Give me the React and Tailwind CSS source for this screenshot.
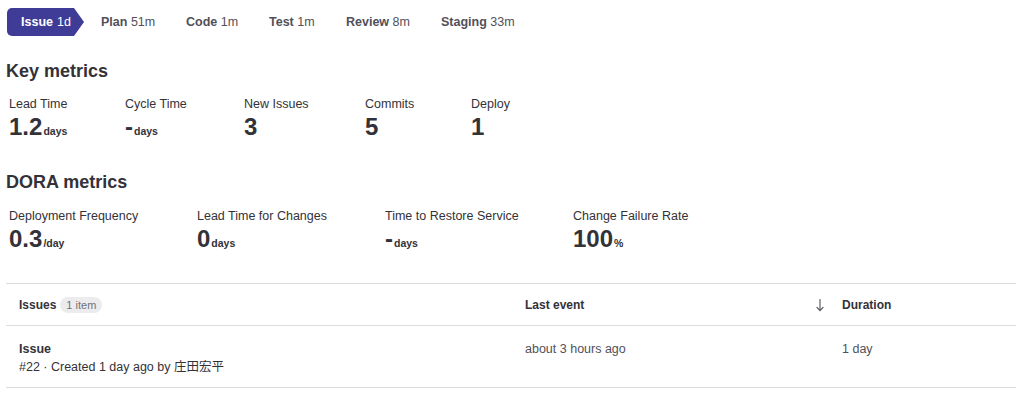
import React from "react";

const stages = [
  ["Plan", "51m"],
  ["Code", "1m"],
  ["Test", "1m"],
  ["Review", "8m"],
  ["Staging", "33m"],
];

const key = [
  ["Lead Time", "1.2", "days", "w-[116px]"],
  ["Cycle Time", "-", "days", "w-[119px]"],
  ["New Issues", "3", "", "w-[121px]"],
  ["Commits", "5", "", "w-[106px]"],
  ["Deploy", "1", "", "w-[106px]"],
];

const dora = [
  ["Deployment Frequency", "0.3", "/day"],
  ["Lead Time for Changes", "0", "days"],
  ["Time to Restore Service", "-", "days"],
  ["Change Failure Rate", "100", "%"],
];

function Metric({ label, value, unit, cls }) {
  return (
    <div className={cls + " flex flex-col"}>
      <div className="text-[12.5px] leading-[18px] text-[#333238]">{label}</div>
      <div className="flex items-baseline text-[#333238]">
        <span className="text-[24px] leading-[28px] font-bold">{value}</span>
        {unit && <span className="text-[10.5px] font-bold ml-[1px]">{unit}</span>}
      </div>
    </div>
  );
}

export default function App() {
  return (
    <div
      className="w-[1024px] h-[402px] bg-white text-[#333238] overflow-hidden"
      style={{ fontFamily: '"Liberation Sans", "Noto Sans CJK JP", Arial, sans-serif' }}
    >
      <div className="flex items-center pl-[7px] pt-[8px] h-[36px]">
        <div className="h-[28px] w-[77px] bg-[#3f3c97] text-white text-[12.5px] font-bold flex items-center pl-[14px] rounded-l-[5px] [clip-path:polygon(0_0,calc(100%-10px)_0,100%_50%,calc(100%-10px)_100%,0_100%)]">
          Issue <span className="ml-[4px] font-normal">1d</span>
        </div>
        <div className="flex items-center text-[12.5px] ml-[17px]">
          {stages.map(([n, v], i) => (
            <div
              key={n}
              className={
                "text-[#525059] " +
                ["w-[85px]", "w-[83px]", "w-[77px]", "w-[95px]", "w-[100px]"][i]
              }
            >
              <span className="font-bold">{n}</span> <span>{v}</span>
            </div>
          ))}
        </div>
      </div>

      <h2 className="text-[18px] font-bold leading-[24px] pl-[6px] mt-[23px]">Key metrics</h2>
      <div className="flex pl-[9px] mt-[12px]">
        {key.map(([l, v, u, c]) => (
          <Metric key={l} label={l} value={v} unit={u} cls={c} />
        ))}
      </div>

      <h2 className="text-[18px] font-bold leading-[24px] pl-[6px] mt-[29px]">DORA metrics</h2>
      <div className="flex pl-[9px] mt-[13px]">
        {dora.map(([l, v, u]) => (
          <Metric key={l} label={l} value={v} unit={u} cls="w-[188px]" />
        ))}
      </div>

      <div className="mx-[6px] w-[1010px] mt-[30px] border-t border-[#dcdcde]">
        <div className="flex items-center h-[42px] border-b border-[#dcdcde] text-[12px] font-bold">
          <div className="w-[519px] pl-[13px] flex items-center">
            Issues
            <span className="ml-[4px] bg-[#ececef] text-[#737278] font-normal text-[11px] rounded-full px-[6px] leading-[16px]">
              1 item
            </span>
          </div>
          <div className="w-[290px]">Last event</div>
          <div className="w-[27px] flex items-center">
            <svg width="10" height="14" viewBox="0 0 10 14" fill="none" stroke="#626168" strokeWidth="1.2" strokeLinecap="round" strokeLinejoin="round">
              <path d="M5 1.5V12.5" />
              <path d="M2 9.5L5 12.5L8 9.5" />
            </svg>
          </div>
          <div>Duration</div>
        </div>
        <div className="flex h-[62px] border-b border-[#dcdcde] text-[12.5px] pt-[14px]">
          <div className="w-[519px] pl-[13px]">
            <div className="font-bold leading-[18px]">Issue</div>
            <div className="leading-[18px]">#22 · Created 1 day ago by 庄田宏平</div>
          </div>
          <div className="w-[317px] text-[#525059] leading-[18px]">about 3 hours ago</div>
          <div className="text-[#525059] leading-[18px]">1 day</div>
        </div>
      </div>
    </div>
  );
}
